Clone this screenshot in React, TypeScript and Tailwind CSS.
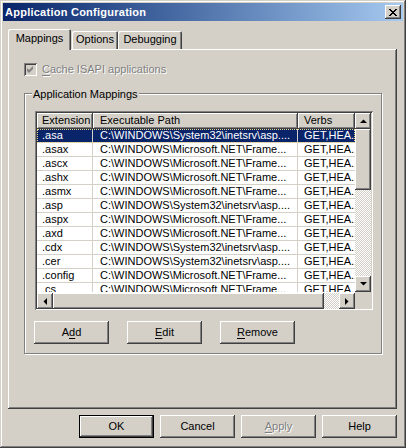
import React from 'react';

type Row = { ext: string; path: string };

const SYS = 'C:\\WINDOWS\\System32\\inetsrv\\asp....';
const NET = 'C:\\WINDOWS\\Microsoft.NET\\Frame...';

const rows: Row[] = [
  { ext: '.asa', path: SYS },
  { ext: '.asax', path: NET },
  { ext: '.ascx', path: NET },
  { ext: '.ashx', path: NET },
  { ext: '.asmx', path: NET },
  { ext: '.asp', path: SYS },
  { ext: '.aspx', path: NET },
  { ext: '.axd', path: NET },
  { ext: '.cdx', path: SYS },
  { ext: '.cer', path: SYS },
  { ext: '.config', path: NET },
  { ext: '.cs', path: NET },
];

const raised =
  'bg-[#d4d0c8] shadow-[inset_-1px_-1px_0_#404040,inset_1px_1px_0_#ffffff,inset_-2px_-2px_0_#808080]';
const dither =
  'bg-[repeating-conic-gradient(#ffffff_0%_25%,#d4d0c8_0%_50%)] bg-[length:2px_2px]';

function Arrow({ dir }: { dir: 'up' | 'down' | 'left' | 'right' }) {
  const pts = {
    up: '0,4 7,4 3.5,0.5',
    down: '0,0 7,0 3.5,3.5',
    left: '4,0 4,7 0.5,3.5',
    right: '0,0 0,7 3.5,3.5',
  }[dir];
  const vertical = dir === 'up' || dir === 'down';
  return (
    <div className={`w-[16px] h-[16px] flex items-center justify-center shrink-0 ${raised}`}>
      <svg width={vertical ? 7 : 4} height={vertical ? 4 : 7} viewBox={vertical ? '0 0 7 4' : '0 0 4 7'}>
        <polygon points={pts} fill="#000" />
      </svg>
    </div>
  );
}

function Button({ children, primary, disabled }: { children: React.ReactNode; primary?: boolean; disabled?: boolean }) {
  return (
    <div
      className={`w-[75px] h-[23px] flex items-center justify-center text-[11px] ${
        disabled ? 'text-[#808080] [text-shadow:1px_1px_0_#ffffff]' : 'text-black'
      } ${
        primary
          ? 'border border-black bg-[#d4d0c8] shadow-[inset_-1px_-1px_0_#404040,inset_1px_1px_0_#ffffff,inset_-2px_-2px_0_#808080]'
          : raised
      }`}
    >
      {children}
    </div>
  );
}

export default function App() {
  return (
    <div className="w-[406px] h-[448px] bg-[#d4d0c8] p-[3px] flex flex-col font-['Liberation_Sans',Arial,sans-serif] text-[11px] leading-[13px] text-black select-none shadow-[inset_-1px_-1px_0_#404040,inset_1px_1px_0_#d4d0c8,inset_-2px_-2px_0_#808080,inset_2px_2px_0_#ffffff]">
      {/* title bar */}
      <div className="h-[18px] shrink-0 flex items-center justify-between pl-[2px] pr-[2px] bg-gradient-to-r from-[#0a246a] to-[#a6caf0]">
        <span className="text-white font-bold tracking-[0.25px]">Application Configuration</span>
        <div className={`w-[16px] h-[14px] flex items-center justify-center ${raised}`}>
          <svg width="8" height="7" viewBox="0 0 8 7">
            <path d="M0 0h2v1h-2zM6 0h2v1h-2zM1 1h2v1h-2zM5 1h2v1h-2zM2 2h4v1h-4zM3 3h2v1h-2zM2 4h4v1h-4zM1 5h2v1h-2zM5 5h2v1h-2zM0 6h2v1h-2zM6 6h2v1h-2z" fill="#000" />
          </svg>
        </div>
      </div>

      <div className="flex-1 flex flex-col pt-[8px] pl-[5px] pr-[6px] pb-[7px]">
        {/* tabs */}
        <div className="h-[20px] flex items-end">
          <div className="relative z-10 w-[63px] h-[21px] -mb-[1px] rounded-t-[2px] bg-[#d4d0c8] flex items-start justify-center pt-[3px] shadow-[inset_1px_1px_0_#ffffff,inset_-1px_0_0_#404040,inset_-2px_0_0_#808080]">
            Mappings
          </div>
          <div className="w-[46px] h-[18px] ml-[1px] rounded-t-[2px] flex items-start justify-center pt-[2px] shadow-[inset_1px_1px_0_#ffffff,inset_-1px_0_0_#404040,inset_-2px_0_0_#808080]">
            Options
          </div>
          <div className="w-[64px] h-[18px] rounded-t-[2px] flex items-start justify-center pt-[2px] shadow-[inset_1px_1px_0_#ffffff,inset_-1px_0_0_#404040,inset_-2px_0_0_#808080]">
            Debugging
          </div>
        </div>

        {/* tab panel */}
        <div className="h-[360px] pt-[14px] pl-[16px] flex flex-col shadow-[inset_-1px_-1px_0_#404040,inset_1px_1px_0_#ffffff,inset_-2px_-2px_0_#808080]">
          <div className="flex items-center h-[13px]">
            <div className="w-[13px] h-[13px] flex items-center justify-center bg-[#d4d0c8] shadow-[inset_1px_1px_0_#808080,inset_-1px_-1px_0_#ffffff,inset_2px_2px_0_#404040,inset_-2px_-2px_0_#d4d0c8]">
              <svg width="7" height="7" viewBox="0 0 7 7">
                <path d="M6 0v3l-4 4-2-2v-3l2 2z" fill="#808080" />
              </svg>
            </div>
            <span className="ml-[5px] text-[#808080] [text-shadow:1px_1px_0_#ffffff]">
              <span className="underline underline-offset-2">C</span>ache ISAPI applications
            </span>
          </div>

          {/* group box */}
          <div className="relative mt-[17px] w-[358px] h-[261px] border border-[#808080] shadow-[inset_1px_1px_0_#ffffff,1px_1px_0_#ffffff] pl-[10px] pt-[17px]">
            <span className="absolute -top-[6px] left-[7px] px-[1px] bg-[#d4d0c8]">Application Mappings</span>

            {/* list view */}
            <div className="w-[338px] h-[199px] p-[2px] bg-white shadow-[inset_1px_1px_0_#808080,inset_-1px_-1px_0_#ffffff,inset_2px_2px_0_#404040,inset_-2px_-2px_0_#d4d0c8]">
              <div className="w-full h-full grid grid-cols-[318px_16px] grid-rows-[179px_16px]">
                <div className="overflow-hidden bg-white">
                  <div className="flex h-[16px]">
                    <div className={`w-[56px] pl-[5px] pt-[1px] shrink-0 ${raised}`}>Extension</div>
                    <div className={`w-[205px] pl-[7px] pt-[1px] shrink-0 ${raised}`}>Executable Path</div>
                    <div className={`w-[57px] pl-[6px] pt-[1px] shrink-0 ${raised}`}>Verbs</div>
                  </div>
                  {rows.map((r, i) => {
                    const sel = i === 0;
                    return (
                      <div
                        key={r.ext}
                        className={`flex h-[14px] border-b border-[#d4d0c8] whitespace-nowrap ${
                          sel ? 'bg-[#0a246a] text-white outline-1 outline-dotted outline-[#e8d890] -outline-offset-1' : ''
                        }`}
                      >
                        <div className="w-[56px] pl-[5px] shrink-0 overflow-hidden border-r border-[#d4d0c8]">{r.ext}</div>
                        <div className="w-[205px] pl-[7px] shrink-0 overflow-hidden border-r border-[#d4d0c8]">{r.path}</div>
                        <div className="w-[57px] pl-[6px] shrink-0 overflow-hidden">GET,HEA...</div>
                      </div>
                    );
                  })}
                </div>

                {/* vertical scrollbar */}
                <div className="flex flex-col">
                  <Arrow dir="up" />
                  <div className={`h-[61px] ${raised}`} />
                  <div className={`flex-1 ${dither}`} />
                  <Arrow dir="down" />
                </div>

                {/* horizontal scrollbar */}
                <div className="flex pt-[1px]">
                  <Arrow dir="left" />
                  <div className={`w-[271px] h-[16px] ${raised}`} />
                  <div className={`flex-1 h-[16px] ${dither}`} />
                  <Arrow dir="right" />
                </div>
                <div className="bg-[#d4d0c8]" />
              </div>
            </div>

            <div className="flex gap-[18px] mt-[11px] -ml-[1px]">
              <Button>
                A<span className="underline underline-offset-2">d</span>d
              </Button>
              <Button>
                <span className="underline underline-offset-2">E</span>dit
              </Button>
              <Button>
                <span className="underline underline-offset-2">R</span>emove
              </Button>
            </div>
          </div>
        </div>

        {/* dialog buttons */}
        <div className="mt-[6px] flex justify-end gap-[6px]">
          <Button primary>OK</Button>
          <Button>Cancel</Button>
          <Button disabled>
            <span className="underline underline-offset-2">A</span>pply
          </Button>
          <Button>Help</Button>
        </div>
      </div>
    </div>
  );
}
